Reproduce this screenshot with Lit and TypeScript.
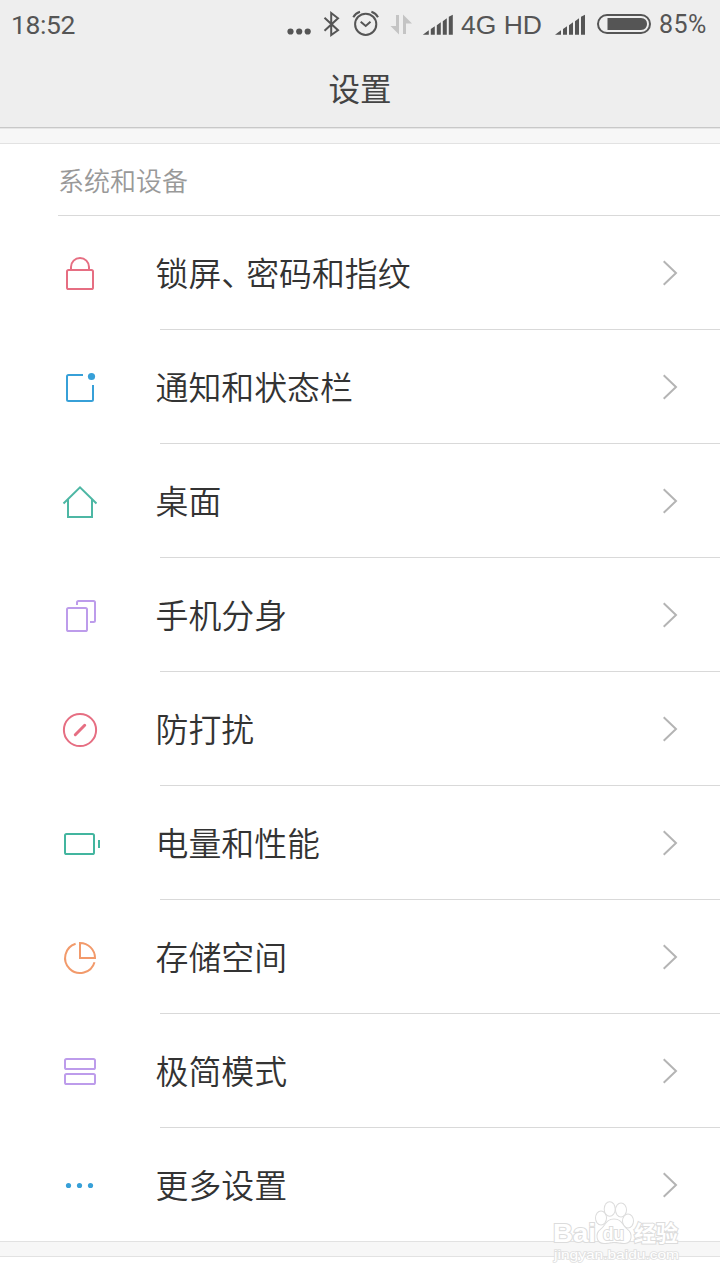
import { LitElement, html, svg, css } from "lit";
import { customElement, property } from "lit/decorators.js";

const ICONS: Record<string, { color: string; art: unknown }> = {
  lock: {
    color: "#e66e82",
    art: svg`<rect x="9" y="19" width="26" height="19" rx="1.6"/><path d="M13 19V16a9 9 0 0 1 18 0V19"/>`,
  },
  notice: {
    color: "#37a0d8",
    art: svg`<path d="M25 10H10.5Q9 10 9 11.5V34.500Q9 36 10.500 36H33.500Q35 36 35 34.500V20"/><circle cx="33.500" cy="11.500" r="3.600" fill="#37a0d8" stroke="none"/>`,
  },
  home: {
    color: "#4db7a4",
    art: svg`<path d="M5.500 24.500L22 8.300L38.500 24.500M10 20.500V38H34V20.500"/>`,
  },
  copy: {
    color: "#bd9ceb",
    art: svg`<rect x="9" y="15" width="20" height="23" rx="1.600"/><path d="M19 12V9.500Q19 8 20.500 8H35.500Q37 8 37 9.500V27.500Q37 29 35.500 29H32"/>`,
  },
  quiet: {
    color: "#e66e82",
    art: svg`<circle cx="22" cy="23" r="16.100"/><path d="M17.300 27.700L26.700 18.300" stroke-width="3" stroke-linecap="round"/>`,
  },
  battery: {
    color: "#43b59f",
    art: svg`<rect x="7" y="13" width="29" height="20" rx="1.600"/><path d="M41 19V27"/>`,
  },
  storage: {
    color: "#f29a6b",
    art: svg`<path d="M22 8V23H37A15 15 0 0 0 22 8Z"/><path d="M17.600 8.700A15 15 0 1 0 36.500 27.200"/>`,
  },
  simple: {
    color: "#bd9ceb",
    art: svg`<rect x="7" y="10" width="30" height="10" rx="1.600"/><rect x="7" y="25" width="30" height="10" rx="1.600"/>`,
  },
  more: {
    color: "#37a0d8",
    art: svg`<g fill="#37a0d8" stroke="none"><circle cx="10.500" cy="22.500" r="2.600"/><circle cx="21.500" cy="22.500" r="2.600"/><circle cx="32.500" cy="22.500" r="2.600"/></g>`,
  },
};

@customElement("setting-row")
class SettingRow extends LitElement {
  @property() icon = "";
  @property() label = "";

  static styles = css`
    :host { display: block; height: 114px; }
    .row { display: flex; height: 114px; padding-left: 58px; box-sizing: border-box; align-items: stretch; }
    .icon { width: 44px; height: 44px; margin-top: 35px; flex: none; }
    .body { flex: 1; display: flex; align-items: center; justify-content: space-between; margin-left: 58px; padding-right: 42px; border-bottom: 1px solid #d9d9d9; }
    .label { margin-left: -4.500px; padding-bottom: 2px; font-size: 32.900px; font-weight: 350; line-height: 48px; color: #333; white-space: nowrap; }
    .pause { letter-spacing: -8px; }
    .chev { width: 16px; height: 28px; flex: none; }
    :host([last]) .body { border-color: transparent; }
  `;

  render() {
    const icon = ICONS[this.icon];
    return html`<div class="row">
      <svg class="icon" viewBox="0 0 44 44" fill="none" stroke=${icon.color} stroke-width="2">${icon.art}</svg>
      <div class="body">
        <span class="label">${this.label.split("、").map((part, i) => (i ? html`<span class="pause">、</span>${part}` : part))}</span>
        <svg class="chev" viewBox="0 0 16 28" fill="none" stroke="#b4b4b4" stroke-width="2"><path d="M1.700 2.200L14 14L1.700 25.800"/></svg>
      </div>
    </div>`;
  }
}

const ROWS = [
  ["lock", "锁屏、密码和指纹"],
  ["notice", "通知和状态栏"],
  ["home", "桌面"],
  ["copy", "手机分身"],
  ["quiet", "防打扰"],
  ["battery", "电量和性能"],
  ["storage", "存储空间"],
  ["simple", "极简模式"],
  ["more", "更多设置"],
];

const signal = svg`<path d="M0 20L6 15.500V20ZM8 14.300L12 11.500V20H8ZM14 10.500L18 7.500V20H14ZM20 6.500L24 3.500V20H20ZM26 2L30 0V20H26Z"/>`;

@customElement("app-root")
class AppRoot extends LitElement {
  static styles = css`
    :host { display: block; position: relative; width: 720px; height: 1280px; overflow: hidden; background: #fff; font-family: "Noto Sans CJK SC", sans-serif; }
    .header { height: 129px; box-sizing: border-box; background: #eee; border-bottom: 1px solid #e6e6e6; box-shadow: inset 0 -1px #c8c8c8; }
    .status { display: flex; height: 50px; color: #555; font-family: Roboto, sans-serif; line-height: 51px; white-space: nowrap; }
    .status svg { height: 50px; flex: none; display: block; fill: #555; }
    .time { width: 275px; padding-left: 11px; font-size: 26.500px; letter-spacing: -0.400px; line-height: 50px; }
    .net { width: 94px; font-family: "Liberation Sans", sans-serif; font-size: 26.500px; }
    .pct { font-size: 25px; letter-spacing: 0.500px; line-height: 49px; }
    .title { height: 77px; text-align: center; font-size: 31.500px; line-height: 75px; color: #444; font-weight: 400; }
    .band { height: 15px; box-sizing: border-box; background: #f7f7f7; border-bottom: 1px solid #e2e2e2; }
    .category { height: 72px; box-sizing: border-box; margin-left: 58px; border-bottom: 1px solid #d9d9d9; color: #999; font-size: 26px; font-weight: 350; line-height: 72px; }
    .end { border-top: 1px solid #e2e2e2; height: 16px; margin-top: -1px; }
    .mark { position: absolute; left: 545px; top: 1195px; width: 145px; height: 72px; }
  `;

  render() {
    return html`
      <header class="header">
        <div class="status">
          <span class="time">18:52</span>
          <svg width="136" viewBox="286 0 136 50">
            <circle cx="290.500" cy="31.500" r="3.100"/><circle cx="299.200" cy="31.500" r="3.100"/><circle cx="307.700" cy="31.500" r="3.100"/>
            <path d="M324.500 17.800L338 30.200L331.200 35V13L338 18.200L324.500 30.700" fill="none" stroke="#555" stroke-width="2"/>
            <g fill="none" stroke="#555" stroke-width="2"><circle cx="365.700" cy="24.300" r="10.600"/><path d="M360.700 21.800L365.700 26L370.500 21.800M353.300 17.300Q355.300 13.300 360 11.800M378 17.300Q376 13.300 371.400 11.800"/></g>
            <path d="M396 15H399V34.500L390.500 26H396ZM403 14.500L412 23.500H406V34H403Z" fill="#c4c4c4"/>
          </svg>
          <svg width="39" viewBox="422 0 39 50"><g transform="translate(422.800 14.700)">${signal}</g></svg>
          <span class="net">4G HD</span>
          <svg width="104" viewBox="555 0 104 50">
            <g transform="translate(555 14.700)">${signal}</g>
            <rect x="598" y="15" width="52" height="18" rx="9" fill="none" stroke="#555" stroke-width="2"/>
            <path d="M607.500 18H641Q647 18.500 647 24Q647 29.500 641 30H607.500Z"/>
          </svg>
          <span class="pct">85%</span>
        </div>
        <div class="title">设置</div>
      </header>
      <div class="band"></div>
      <div class="category">系统和设备</div>
      ${ROWS.map(([icon, label], i) => html`<setting-row icon=${icon} label=${label} ?last=${i === ROWS.length - 1}></setting-row>`)}
      <div class="band end"></div>
      <svg class="mark" viewBox="545 1195 145 72" fill="#fff" stroke="#dcdcdc" stroke-width="2" paint-order="stroke" font-family="Liberation Sans, sans-serif" font-weight="700">
        <ellipse cx="601" cy="1218" rx="5" ry="6.500"/><ellipse cx="609.700" cy="1209" rx="5" ry="6.800"/><ellipse cx="621" cy="1210" rx="5" ry="6.500"/><ellipse cx="628" cy="1221" rx="5" ry="6.500"/>
        <path d="M614 1219.500C606 1219.500 606 1226 601 1229.500C595 1234 597 1243 604 1243C609 1243 610 1242 614 1242C618 1242 620 1243 625 1243C631 1243 633 1234 627 1229.500C622 1226 622 1219.500 614 1219.500Z"/>
        <text x="553" y="1241.500" font-size="26.500" textLength="43" lengthAdjust="spacingAndGlyphs">Bai</text>
        <text x="603" y="1240" font-size="18" textLength="21" lengthAdjust="spacingAndGlyphs" stroke-width="2">du</text>
        <text x="634" y="1240.500" font-size="22" font-family="Noto Sans CJK SC, sans-serif">经验</text>
        <text x="554" y="1258.500" font-size="13.500" font-weight="400" stroke="#e0e0e0" stroke-width="1.600" textLength="125" lengthAdjust="spacingAndGlyphs">jingyan.baidu.com</text>
      </svg>
    `;
  }
}
